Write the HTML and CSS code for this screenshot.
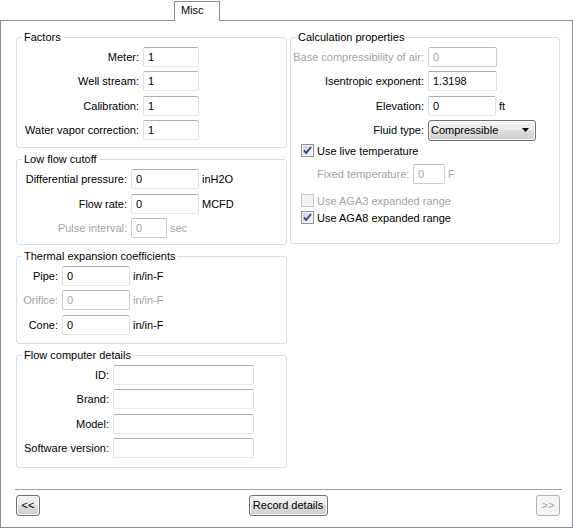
FILE: index.html
```
<!DOCTYPE html>
<html>
<head>
<meta charset="utf-8">
<title>Misc</title>
<link rel="stylesheet" href="styles.css">
</head>
<body>
<div class="window">
  <div class="tabstrip"><div class="tab">Misc</div></div>
  <div class="panel">
    <div class="columns">
      <div class="col col-left">
        <fieldset class="group g-factors">
          <legend>Factors</legend>
          <div class="form form-factors">
            <label class="lbl">Meter:</label><div class="field"><input class="txt w56" type="text" value="1"></div>
            <label class="lbl">Well stream:</label><div class="field"><input class="txt w56" type="text" value="1"></div>
            <label class="lbl">Calibration:</label><div class="field"><input class="txt w56" type="text" value="1"></div>
            <label class="lbl">Water vapor correction:</label><div class="field"><input class="txt w56" type="text" value="1"></div>
          </div>
        </fieldset>
        <fieldset class="group g-lowflow">
          <legend>Low flow cutoff</legend>
          <div class="form form-lowflow">
            <label class="lbl">Differential pressure:</label><div class="field"><input class="txt w68" type="text" value="0"><span class="unit">inH2O</span></div>
            <label class="lbl">Flow rate:</label><div class="field"><input class="txt w68" type="text" value="0"><span class="unit">MCFD</span></div>
            <label class="lbl disabled">Pulse interval:</label><div class="field"><input class="txt w36" type="text" value="0" disabled><span class="unit disabled unit-near">sec</span></div>
          </div>
        </fieldset>
        <fieldset class="group g-thermal">
          <legend>Thermal expansion coefficients</legend>
          <div class="form form-thermal">
            <label class="lbl">Pipe:</label><div class="field"><input class="txt w68" type="text" value="0"><span class="unit">in/in-F</span></div>
            <label class="lbl disabled">Orifice:</label><div class="field"><input class="txt w68" type="text" value="0" disabled><span class="unit disabled">in/in-F</span></div>
            <label class="lbl">Cone:</label><div class="field"><input class="txt w68" type="text" value="0"><span class="unit">in/in-F</span></div>
          </div>
        </fieldset>
        <fieldset class="group g-computer">
          <legend>Flow computer details</legend>
          <div class="form form-computer">
            <label class="lbl">ID:</label><div class="field"><input class="txt w141" type="text" value=""></div>
            <label class="lbl">Brand:</label><div class="field"><input class="txt w141" type="text" value=""></div>
            <label class="lbl">Model:</label><div class="field"><input class="txt w141" type="text" value=""></div>
            <label class="lbl">Software version:</label><div class="field"><input class="txt w141" type="text" value=""></div>
          </div>
        </fieldset>
      </div>
      <div class="col col-right">
        <fieldset class="group g-calc">
          <legend>Calculation properties</legend>
          <div class="form form-calc">
            <label class="lbl disabled">Base compressibility of air:</label><div class="field"><input class="txt w69" type="text" value="0" disabled></div>
            <label class="lbl">Isentropic exponent:</label><div class="field"><input class="txt w69" type="text" value="1.3198"></div>
            <label class="lbl">Elevation:</label><div class="field"><input class="txt w68" type="text" value="0"><span class="unit">ft</span></div>
            <label class="lbl">Fluid type:</label>
            <div class="field">
              <div class="combo">
                <span class="combo-text">Compressible</span>
                <svg class="combo-arrow" width="7" height="4" viewBox="0 0 7 4"><path d="M0 0H7L3.5 4Z" fill="#000"/></svg>
              </div>
            </div>
          </div>
          <div class="checks">
            <div class="check check-live">
              <svg class="cb" width="13" height="13" viewBox="0 0 13 13">
                <defs><linearGradient id="cbg1" x1="0" y1="0" x2="1" y2="1"><stop offset="0" stop-color="#cdd0d5"/><stop offset="1" stop-color="#f7f7f7"/></linearGradient></defs>
                <rect x="0.5" y="0.5" width="12" height="12" fill="#f4f4f4" stroke="#8e8f8f"/>
                <rect x="2" y="2" width="9" height="9" fill="url(#cbg1)"/>
                <path d="M3 6.3 L5.2 9 L10 3" fill="none" stroke="#2b4c94" stroke-width="1.9"/>
              </svg>
              <span>Use live temperature</span>
            </div>
            <div class="fixed-row">
              <span class="fixed-lbl disabled">Fixed temperature:</span>
              <input class="txt w32" type="text" value="0" disabled>
              <span class="unit disabled">F</span>
            </div>
            <div class="check check-aga3 disabled">
              <svg class="cb" width="13" height="13" viewBox="0 0 13 13">
                <rect x="0.5" y="0.5" width="12" height="12" fill="#f7f7f7" stroke="#c6c6c6"/>
                <rect x="2" y="2" width="9" height="9" fill="#f1f1f1"/>
              </svg>
              <span>Use AGA3 expanded range</span>
            </div>
            <div class="check check-aga8">
              <svg class="cb" width="13" height="13" viewBox="0 0 13 13">
                <defs><linearGradient id="cbg2" x1="0" y1="0" x2="1" y2="1"><stop offset="0" stop-color="#cdd0d5"/><stop offset="1" stop-color="#f7f7f7"/></linearGradient></defs>
                <rect x="0.5" y="0.5" width="12" height="12" fill="#f4f4f4" stroke="#8e8f8f"/>
                <rect x="2" y="2" width="9" height="9" fill="url(#cbg2)"/>
                <path d="M3 6.3 L5.2 9 L10 3" fill="none" stroke="#2b4c94" stroke-width="1.9"/>
              </svg>
              <span>Use AGA8 expanded range</span>
            </div>
          </div>
        </fieldset>
      </div>
    </div>
    <div class="footer">
      <div class="sep"></div>
      <div class="buttons">
        <button class="btn btn-nav" type="button">&lt;&lt;</button>
        <button class="btn btn-record" type="button">Record details</button>
        <button class="btn btn-nav" type="button" disabled>&gt;&gt;</button>
      </div>
    </div>
  </div>
</div>
</body>
</html>
```

FILE: styles.css
```
* {
  box-sizing: border-box;
}

html, body {
  margin: 0;
  padding: 0;
  background: #ffffff;
}

body {
  font-family: "Liberation Sans", Arial, sans-serif;
  font-size: 11px;
  color: #000000;
}

.window {
  width: 573px;
  height: 528px;
  display: flex;
  flex-direction: column;
}

.tabstrip {
  height: 20px;
  display: flex;
  padding-left: 174px;
  padding-top: 1px;
}

.tab {
  position: relative;
  z-index: 1;
  width: 46px;
  height: 20px;
  border: 1px solid #898c95;
  border-bottom: none;
  background: #ffffff;
  padding-left: 6px;
  line-height: 17px;
  color: #000;
}

.panel {
  height: 508px;
  border: 1px solid #898c95;
  display: flex;
  flex-direction: column;
}

.columns {
  display: flex;
  align-items: flex-start;
  gap: 3px;
  padding: 10px 12px 0 15px;
}

.col {
  display: flex;
  flex-direction: column;
  gap: 5px;
}

.col-left {
  width: 271px;
}

.col-right {
  width: 270px;
}

.group {
  margin: 0;
  padding: 0;
  min-width: 0;
  border: 1px solid #d5dfe5;
  border-radius: 3px;
}

.group legend {
  margin-left: 5px;
  padding: 0 2px;
  line-height: 13px;
  font-size: 11px;
  color: #000;
}

.form {
  display: grid;
  column-gap: 4px;
  row-gap: 4.4px;
  align-items: center;
  padding-top: 3px;
}

.form-factors {
  grid-template-columns: 122px auto;
  padding-bottom: 7px;
}

.form-lowflow {
  grid-template-columns: 110px auto;
  padding-bottom: 6px;
}

.form-thermal {
  grid-template-columns: 41px auto;
  padding-bottom: 8px;
}

.form-computer {
  grid-template-columns: 92px auto;
  padding-bottom: 9px;
}

.form-calc {
  grid-template-columns: 133px auto;
}

.lbl {
  text-align: right;
  white-space: nowrap;
  line-height: 20px;
}

.disabled {
  color: #a3a3a3;
}

.field {
  display: flex;
  align-items: center;
  height: 20px;
}

.txt {
  height: 20px;
  margin: 0;
  padding: 0 4px;
  border: 1px solid #dbdfe6;
  border-top-color: #abadb3;
  border-bottom-color: #e3e9ef;
  border-radius: 2px;
  background: #ffffff;
  font-family: "Liberation Sans", Arial, sans-serif;
  font-size: 11px;
  color: #000;
  outline: none;
}

.txt:disabled {
  border-color: #c9cdd3;
  border-top-color: #b5b8bf;
  background: #ffffff;
  color: #a3a3a3;
}

.w32 { width: 32px; }
.w36 { width: 36px; }
.w56 { width: 56px; }
.w68 { width: 68px; }
.w69 { width: 69px; }
.w141 { width: 141px; }

.unit {
  margin-left: 3px;
  white-space: nowrap;
}

.unit-near {
  margin-left: 3px;
}

.combo {
  width: 108px;
  height: 21px;
  border: 1px solid #707070;
  border-radius: 3px;
  background: linear-gradient(#f2f2f2 0%, #ebebeb 50%, #dddddd 50%, #cfcfcf 100%);
  box-shadow: inset 0 0 0 1px #fbfbfb;
  display: flex;
  align-items: center;
  justify-content: space-between;
  padding: 0 6px 0 2px;
}

.combo-text {
  line-height: 19px;
}

.combo-arrow {
  display: block;
}

.checks {
  display: flex;
  flex-direction: column;
  padding: 2px 0 17px 0;
}

.check {
  display: flex;
  align-items: center;
  gap: 3px;
  height: 17px;
  padding-left: 10px;
  white-space: nowrap;
}

.cb {
  display: block;
  flex: none;
}

.fixed-row {
  display: flex;
  align-items: center;
  height: 20px;
  margin-top: 5px;
  padding-left: 26px;
}

.fixed-lbl {
  width: 92px;
  margin-right: 4px;
  text-align: right;
  white-space: nowrap;
}

.check-aga3 {
  margin-top: 8px;
}

.footer {
  margin-top: auto;
  padding-bottom: 11px;
}

.sep {
  height: 1px;
  margin: 0 10px 0 14px;
  background: #a0a0a0;
}

.buttons {
  display: flex;
  justify-content: space-between;
  margin-top: 5px;
  padding: 0 12px 0 15px;
}

.btn {
  height: 21px;
  margin: 0;
  padding: 0;
  border: 1px solid #707070;
  border-radius: 3px;
  background: linear-gradient(#f2f2f2 0%, #ebebeb 50%, #dddddd 50%, #cfcfcf 100%);
  box-shadow: inset 0 0 0 1px #fbfbfb;
  font-family: "Liberation Sans", Arial, sans-serif;
  font-size: 11px;
  color: #000;
  line-height: 19px;
}

.btn-nav {
  width: 24px;
}

.btn-record {
  width: 79px;
}

.btn:disabled {
  border-color: #adb2b5;
  background: #f4f4f4;
  box-shadow: none;
  color: #a3a3a3;
}
```
